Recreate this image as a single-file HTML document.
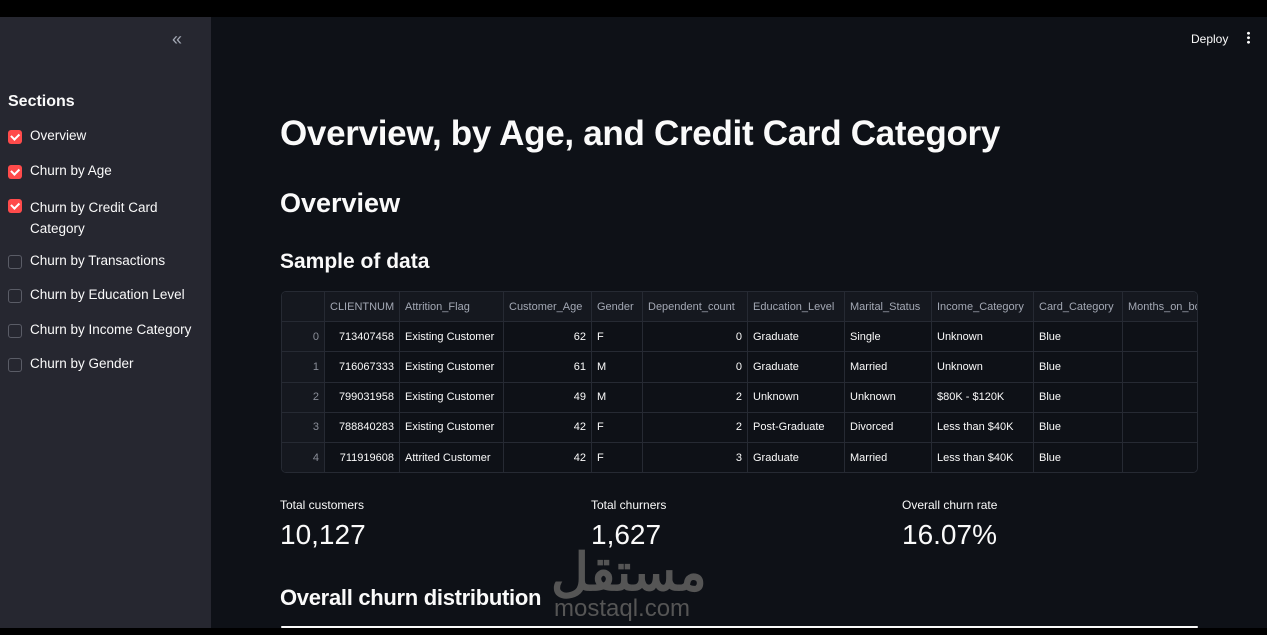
<!DOCTYPE html>
<html><head><meta charset="utf-8"><style>
*{margin:0;padding:0;box-sizing:border-box}
body{width:1267px;height:635px;background:#000;font-family:"Liberation Sans",sans-serif;color:#fafafa;position:relative;overflow:hidden}
.sb{position:absolute;left:0;top:17px;width:211px;height:611px;background:#262730}
.main{position:absolute;left:211px;top:17px;width:1056px;height:611px;background:#0e1117}
.abs{position:absolute;white-space:nowrap}
.cb{position:absolute;left:8px;width:14px;height:14px;border-radius:3px}
.on{background:#ff4b4b}
.on::after{content:"";position:absolute;left:3px;top:3px;width:6px;height:3.5px;border-left:2px solid #fff;border-bottom:2px solid #fff;transform:rotate(-45deg)}
.off{border:1px solid #5a5c66;background:#262730}
.lbl{position:absolute;left:30px;font-size:13.5px;color:#fafafa}
table{position:absolute;border-collapse:collapse;font-size:11px;color:#fafafa;background:#0e1117;table-layout:fixed;width:931px}
td,th{height:30.2px;border:1px solid #262a33;padding:0 5px;white-space:nowrap;font-weight:normal;overflow:hidden}
th{color:#a3a8b4;background:#15181f;text-align:left}
td.i{color:#8a8e98;text-align:right;background:#15181f}
.r{text-align:right}
</style></head><body>
<div class="sb">
<div class="abs" style="left:172px;top:12px;font-size:18px;color:#a3a8b4">«</div>
<div class="abs" style="left:8px;top:76px;font-size:16px;font-weight:bold">Sections</div>
<div class="cb on" style="top:113px"></div><div class="lbl" style="top:111px">Overview</div>
<div class="cb on" style="top:148px"></div><div class="lbl" style="top:146px">Churn by Age</div>
<div class="cb on" style="top:182px"></div><div class="lbl" style="top:180px;line-height:21px">Churn by Credit Card<br>Category</div>
<div class="cb off" style="top:238px"></div><div class="lbl" style="top:236px">Churn by Transactions</div>
<div class="cb off" style="top:272px"></div><div class="lbl" style="top:270px">Churn by Education Level</div>
<div class="cb off" style="top:307px"></div><div class="lbl" style="top:305px">Churn by Income Category</div>
<div class="cb off" style="top:341px"></div><div class="lbl" style="top:339px">Churn by Gender</div>
</div>
<div class="main">
<div class="abs" style="left:980px;top:15px;font-size:12px">Deploy</div>
<div class="abs" style="left:1036px;top:14px;width:3px;height:13px;background:radial-gradient(circle,#fafafa 1.3px,transparent 1.6px) 0 0/3px 4.5px"></div>
<div class="abs" style="left:69px;top:97px;font-size:35px;font-weight:bold;letter-spacing:-0.3px">Overview, by Age, and Credit Card Category</div>
<div class="abs" style="left:69px;top:171px;font-size:27px;font-weight:bold">Overview</div>
<div class="abs" style="left:69px;top:233px;font-size:21px;font-weight:bold">Sample of data</div>
<div class="abs" style="left:69px;top:481px;font-size:12px">Total customers</div>
<div class="abs" style="left:380px;top:481px;font-size:12px">Total churners</div>
<div class="abs" style="left:691px;top:481px;font-size:12px">Overall churn rate</div>
<div class="abs" style="left:69px;top:502px;font-size:28px">10,127</div>
<div class="abs" style="left:380px;top:502px;font-size:28px">1,627</div>
<div class="abs" style="left:691px;top:502px;font-size:28px">16.07%</div>
<div class="abs" style="left:69px;top:568px;font-size:22px;font-weight:bold;letter-spacing:-0.3px">Overall churn distribution</div>
<div class="abs" style="left:340px;top:526px;font-size:52px;font-weight:bold;color:#555">مستقل</div>
<div class="abs" style="left:343px;top:578px;font-size:24px;color:#555">mostaql.com</div>
<div class="abs" style="left:70px;top:609px;width:917px;height:2px;background:#fafafa;border-radius:2px"></div>
</div>
<div style="position:absolute;left:281px;top:291px;width:917px;height:182px;overflow:hidden;border:1px solid #262a33;border-radius:5px">
<table style="left:-1px;top:-1px">
<colgroup><col style="width:43px"><col style="width:75px"><col style="width:104px"><col style="width:88px"><col style="width:51px"><col style="width:105px"><col style="width:97px"><col style="width:87px"><col style="width:102px"><col style="width:89px"><col style="width:90px"></colgroup>
<tr><th></th><th>CLIENTNUM</th><th>Attrition_Flag</th><th>Customer_Age</th><th>Gender</th><th>Dependent_count</th><th>Education_Level</th><th>Marital_Status</th><th>Income_Category</th><th>Card_Category</th><th>Months_on_book</th></tr>
<tr><td class="i">0</td><td class="r">713407458</td><td>Existing Customer</td><td class="r">62</td><td>F</td><td class="r">0</td><td>Graduate</td><td>Single</td><td>Unknown</td><td>Blue</td><td></td></tr>
<tr><td class="i">1</td><td class="r">716067333</td><td>Existing Customer</td><td class="r">61</td><td>M</td><td class="r">0</td><td>Graduate</td><td>Married</td><td>Unknown</td><td>Blue</td><td></td></tr>
<tr><td class="i">2</td><td class="r">799031958</td><td>Existing Customer</td><td class="r">49</td><td>M</td><td class="r">2</td><td>Unknown</td><td>Unknown</td><td>$80K - $120K</td><td>Blue</td><td></td></tr>
<tr><td class="i">3</td><td class="r">788840283</td><td>Existing Customer</td><td class="r">42</td><td>F</td><td class="r">2</td><td>Post-Graduate</td><td>Divorced</td><td>Less than $40K</td><td>Blue</td><td></td></tr>
<tr><td class="i">4</td><td class="r">711919608</td><td>Attrited Customer</td><td class="r">42</td><td>F</td><td class="r">3</td><td>Graduate</td><td>Married</td><td>Less than $40K</td><td>Blue</td><td></td></tr>
</table></div>
</body></html>
